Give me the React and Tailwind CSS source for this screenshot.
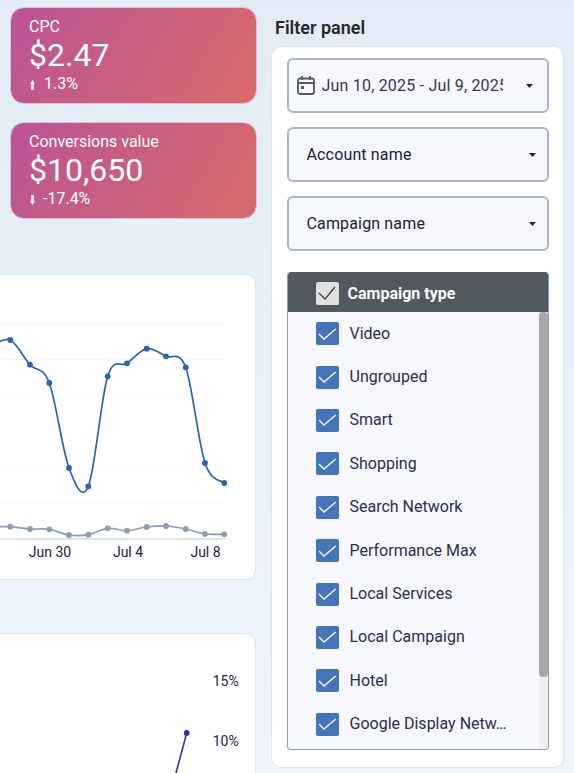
const spline = (pts) => {
  let d = `M${pts[0][0]} ${pts[0][1]}`;
  for (let i = 0; i < pts.length - 1; i++) {
    const p0 = pts[i - 1] || pts[i];
    const p1 = pts[i];
    const p2 = pts[i + 1];
    const p3 = pts[i + 2] || p2;
    const c1x = p1[0] + (p2[0] - p0[0]) / 6;
    const c1y = p1[1] + (p2[1] - p0[1]) / 6;
    const c2x = p2[0] - (p3[0] - p1[0]) / 6;
    const c2y = p2[1] - (p3[1] - p1[1]) / 6;
    d += ` C${c1x} ${c1y} ${c2x} ${c2y} ${p2[0]} ${p2[1]}`;
  }
  return d;
};

const CARD_X = 30;
const CARD_Y = 274;
const mk = (arr) => arr.map(([x, y]) => [x + CARD_X, y - CARD_Y]);
const blue = mk([[-9, 346], [10.3, 340], [30, 364.7], [49.3, 383], [69, 468], [88.3, 486.3], [107.7, 376.3], [127, 363.3], [146.7, 348.7], [166, 356.3], [185.7, 367.3], [205, 463], [224.3, 483]]);
const gray = mk([[-9, 527], [10.3, 526.7], [30, 529], [49.3, 529.3], [69, 535], [88.3, 534.7], [107.7, 528.3], [127, 530.7], [146.7, 527], [166, 526], [185.7, 529], [205, 534], [224.3, 534.3]]);
const grid = [324, 359.5, 395, 432, 467, 503];

function Kpi({ title, value, delta, up }) {
  return (
    <div className="h-[97px] shrink-0 rounded-[14px] border border-[#dcc0d4] bg-[linear-gradient(120deg,#bb5496,#d86a69)] pl-[18px] pt-[9px] text-white">
      <div className="text-[16px] leading-[19px]">{title}</div>
      <div className="mt-[1px] text-[32px] leading-[36px]">{value}</div>
      <div className="mt-[2px] flex items-center text-[16px] leading-[18px]">
        <svg width="5" height="10" viewBox="0 0 5 10" className={`ml-[1px] mt-[2px] fill-white ${up ? "mr-[9px]" : "mr-[8px]"}`}>
          {up ? (
            <>
              <path d="M2.5 0L5 4H0z" />
              <path d="M1 4H4V10H1z" opacity="0.8" />
            </>
          ) : (
            <>
              <path d="M2.5 10L5 6H0z" />
              <path d="M1 0H4V6H1z" opacity="0.8" />
            </>
          )}
        </svg>
        <span>{delta}</span>
      </div>
    </div>
  );
}

function Caret() {
  return (
    <svg width="7" height="4" viewBox="0 0 7 4" className="fill-[#26263c]">
      <path d="M0 0H7L3.5 4z" />
    </svg>
  );
}

function SelectBox({ label }) {
  return (
    <div className="flex h-[55px] items-center justify-between rounded-[6px] border-2 border-[#a8b5cb] bg-[#f6f8fd] pl-[18px] pr-[11px] text-[16px] tracking-[0.15px] text-[#1c1c3a]">
      <span>{label}</span>
      <Caret />
    </div>
  );
}

function Check({ header }) {
  return (
    <span className={`flex h-[23px] w-[23px] shrink-0 items-center justify-center rounded-[2px] ${header ? "bg-[#e0e0e0]" : "bg-[#4375b8]"}`}>
      {header ? (
        <svg width="18" height="14" viewBox="0 0 18 14" fill="none" stroke="#3d4147" strokeWidth="1.3">
          <path d="M1 7L7 13L17 1" />
        </svg>
      ) : (
        <svg width="19" height="12" viewBox="0 0 19 12" fill="none" stroke="#ffffff" strokeWidth="1.3">
          <path d="M1 6L6 11L17.7 1" />
        </svg>
      )}
    </span>
  );
}

const types = ["Video", "Ungrouped", "Smart", "Shopping", "Search Network", "Performance Max", "Local Services", "Local Campaign", "Hotel", "Google Display Netw…"];

export default function App() {
  return (
    <div className="flex h-[773px] w-[574px] overflow-hidden bg-gradient-to-b from-[#e3ecf6] to-[#eef5fd] font-['Roboto',sans-serif]">
      <div className="ml-[10px] flex w-[247px] shrink-0 flex-col pt-[7px]">
        <Kpi title="CPC" value="$2.47" delta="1.3%" up />
        <div className="mt-[18px] shrink-0">
          <Kpi title="Conversions value" value="$10,650" delta="-17.4%" />
        </div>
        <div className="-ml-[40px] mt-[55px] h-[306px] w-[286px] shrink-0 rounded-[10px] border-[1.5px] border-[#dbe6f2] bg-white">
          <svg width="285" height="304" viewBox="0 0 285 304" className="-m-[1.5px] block overflow-visible">
            {grid.map((y) => (
              <line key={y} x1="0" x2={CARD_X + 225} y1={y - CARD_Y} y2={y - CARD_Y} stroke="#f7f7f8" strokeWidth="1" />
            ))}
            <line x1="0" x2={CARD_X + 225} y1={539 - CARD_Y} y2={539 - CARD_Y} stroke="#c9c9cc" strokeWidth="1" />
            <path d={spline(gray)} fill="none" stroke="#8c9cb4" strokeWidth="1.7" />
            <path d={spline(blue)} fill="none" stroke="#2c63ad" strokeWidth="1.7" />
            {gray.map(([x, y]) => <circle key={x} cx={x} cy={y} r="2.9" fill="#8c9cb4" />)}
            {blue.map(([x, y]) => <circle key={x} cx={x} cy={y} r="2.9" fill="#2c63ad" />)}
            <g fill="#1f2038" fontSize="14" textAnchor="middle">
              <text x={CARD_X + 50} y={557 - CARD_Y}>Jun 30</text>
              <text x={CARD_X + 128} y={557 - CARD_Y}>Jul 4</text>
              <text x={CARD_X + 205.5} y={557 - CARD_Y}>Jul 8</text>
            </g>
          </svg>
        </div>
        <div className="-ml-[40px] mt-[53px] h-[300px] w-[286px] shrink-0 rounded-[10px] border-[1.5px] border-[#dbe6f2] bg-white">
          <svg width="285" height="200" viewBox="0 0 285 200" className="-m-[1.5px] block overflow-visible">
            <path d="M204.4 146L216.7 100" fill="none" stroke="#4a2a9c" strokeWidth="1.6" />
            <circle cx="216.7" cy="100" r="2.9" fill="#4a2a9c" />
            <g fill="#24243e" fontSize="14">
              <text x="242.7" y="52.5">15%</text>
              <text x="242.7" y="112.5">10%</text>
            </g>
          </svg>
        </div>
      </div>

      <div className="ml-[14px] flex w-[293px] shrink-0 flex-col">
        <div className="mt-[18px] pl-[4px] text-[18px] font-semibold leading-[20px] text-[#26282c]">Filter panel</div>
        <div className="mt-[8px] h-[722px] rounded-[10px] border-[1.5px] border-[#dbe6f2] bg-white px-[14.5px] pt-[11px]">
          <div className="flex h-[55px] items-center rounded-[6px] border-2 border-[#a8b5cb] bg-[#f6f8fd] pl-[7px] pr-[14px]">
            <svg width="20" height="21" viewBox="0 0 20 21" fill="none" className="mr-[6px] shrink-0" stroke="#55585e" strokeWidth="1.8">
              <rect x="2" y="3.5" width="16" height="15.5" rx="2" />
              <path d="M2 8H18M6 1V5M14 1V5" />
              <rect x="5" y="11" width="3" height="3" fill="#55585e" stroke="none" />
            </svg>
            <span className="w-[181px] shrink-0 overflow-hidden whitespace-nowrap text-[16px] tracking-[0.2px] text-[#3a3654]">Jun 10, 2025 - Jul 9, 2025</span>
            <span className="ml-auto"><Caret /></span>
          </div>
          <div className="mt-[14px]"><SelectBox label="Account name" /></div>
          <div className="mt-[14px]"><SelectBox label="Campaign name" /></div>
          <div className="mt-[21px] flex h-[478px] flex-col overflow-hidden rounded-[4px] border-[1.5px] border-t-0 border-[#8a9cb8] bg-[#f6f8fd]">
            <div className="flex h-[40px] shrink-0 items-center bg-[#51585f] pl-[28px] pt-[2px] text-[16px] font-bold text-white">
              <Check header />
              <span className="ml-[9px] mt-[2px]">Campaign type</span>
            </div>
            <div className="flex min-h-0 flex-1">
              <div className="min-w-0 flex-1 pl-[28px]">
                {types.map((t) => (
                  <div key={t} className="flex h-[43.4px] items-center text-[16px] text-[#2f2e4d]">
                    <Check />
                    <span className="ml-[11px] whitespace-nowrap">{t}</span>
                  </div>
                ))}
              </div>
              <div className="w-[9px] shrink-0 bg-[#eeeeee]">
                <div className="h-[365px] rounded-[4px] bg-[#a9a9a9]" />
              </div>
            </div>
          </div>
        </div>
      </div>
    </div>
  );
}
